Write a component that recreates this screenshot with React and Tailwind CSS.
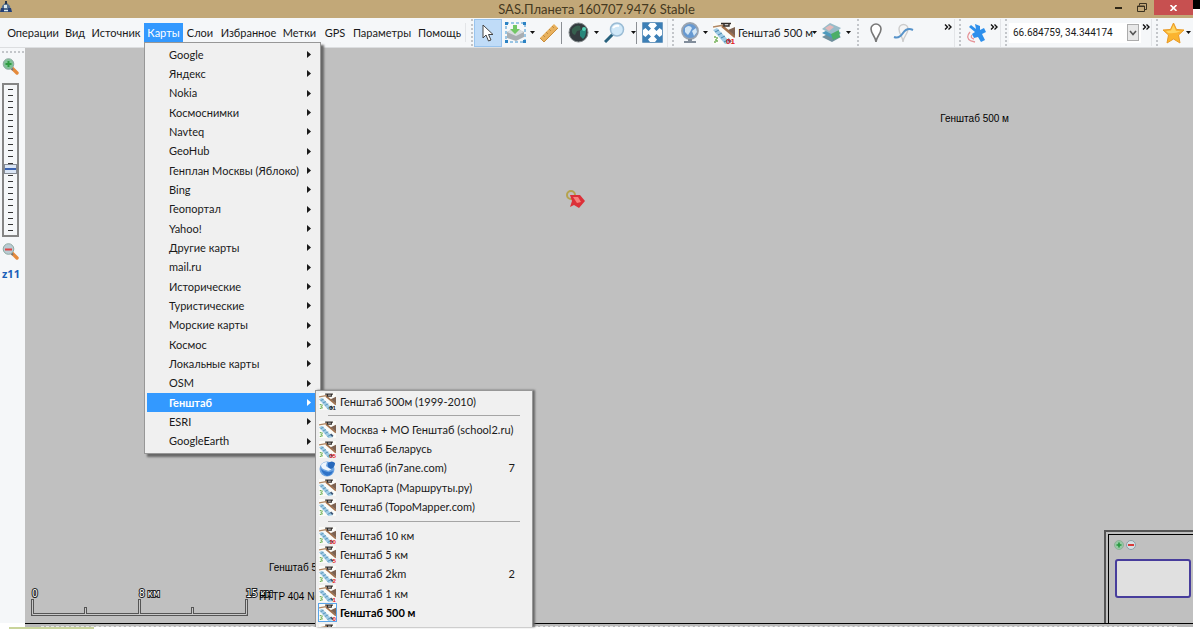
import React from 'react';

const menuItems = [
  { label: 'Операции', width: 'w-[58px]' },
  { label: 'Вид', width: 'w-[26px]' },
  { label: 'Источник', width: 'w-[56px]' },
  { label: 'Карты', width: 'w-[39px]', open: true },
  { label: 'Слои', width: 'w-[34px]' },
  { label: 'Избранное', width: 'w-[63px]' },
  { label: 'Метки', width: 'w-[39px]' },
  { label: 'GPS', width: 'w-[32px]' },
  { label: 'Параметры', width: 'w-[62px]' },
  { label: 'Помощь', width: 'w-[53px]' },
];

const mapGroups = [
  'Google', 'Яндекс', 'Nokia', 'Космоснимки', 'Navteq', 'GeoHub', 'Генплан Москвы (Яблоко)',
  'Bing', 'Геопортал', 'Yahoo!', 'Другие карты', 'mail.ru', 'Исторические', 'Туристические',
  'Морские карты', 'Космос', 'Локальные карты', 'OSM', 'Генштаб', 'ESRI', 'GoogleEarth',
];

const schoolMaps = [
  { label: 'Москва + МО Генштаб (school2.ru)' },
  { label: 'Генштаб Беларусь', mark: '05', markColor: '#e02020' },
  { label: 'Генштаб (in7ane.com)', hotkey: '7', globe: true },
  { label: 'ТопоКарта (Маршруты.ру)' },
  { label: 'Генштаб (TopoMapper.com)' },
];

const scaleMaps = [
  { label: 'Генштаб 10 км', mark: '10', markColor: '#e02020' },
  { label: 'Генштаб 5 км', mark: '5', markColor: '#e02020' },
  { label: 'Генштаб 2km', mark: '2', markColor: '#e02020', hotkey: '2' },
  { label: 'Генштаб 1 км', mark: '1', markColor: '#e02020' },
  { label: 'Генштаб 500 м', mark: '0', markColor: '#e02020', active: true },
  { label: '' },
];

const MapIcon = ({ size = 17, mark, markColor = '#222' }) => (
  <svg width={size} height={size} viewBox="0 0 22 22" className="shrink-0">
    <rect width="22" height="22" fill="#fbfbf8" />
    <path d="M0 8 L4 6 L18 21 L12 22 Z" fill="#9fcbe6" />
    <path d="M2 10 l4 -2 M5 13 l4 -2 M8 16 l4 -2 M11 20 l4 -2" stroke="#4585ab" strokeWidth="1" />
    <path d="M0 5 L11 3" stroke="#b08763" strokeWidth="1.6" fill="none" />
    <path d="M9 4 L22 15" stroke="#a2714c" strokeWidth="2.4" fill="none" />
    <path d="M15 8 L22 5 V14 Z" fill="#7d6251" />
    <path d="M8 1.5 h10 M11 2 v2 h5 V2" stroke="#302b28" strokeWidth="1.4" fill="none" />
    <path d="M1 15 h3 v5 H1 M2 18 h3" stroke="#74b35b" strokeWidth="1.5" strokeDasharray="2 1" fill="none" />
    <path d="M15 17 l3 3" stroke="#3a5576" strokeWidth="2.2" />
    {mark && (
      <text x="22" y="22" textAnchor="end" fontSize="8" fontWeight="700" fontFamily="Liberation Sans, sans-serif" fill={markColor}>{mark}</text>
    )}
  </svg>
);

const BirdIcon = () => (
  <svg width="17" height="17" viewBox="0 0 17 17" className="shrink-0">
    <circle cx="8" cy="9" r="7.5" fill="#6ba3e2" />
    <path d="M2 5 Q4 2 8 2 L7 6 Q10 9 13 8 Q11 12 7 10 Q2 9 2 5Z" fill="#eef6fd" />
    <path d="M9 3 Q13 0 16 3 Q16 7 12 9 Q8 8 9 3Z" fill="#2768bb" />
    <path d="M2 9 Q3 14 8 16 Q13 15 14 11 Q8 14 2 9Z" fill="#2f73c8" />
  </svg>
);

const Caret = ({ className = 'w-[10px]' }) => (
  <span className={`flex h-full shrink-0 items-center justify-center ${className}`}>
    <svg width="5" height="3" viewBox="0 0 5 3" className="shrink-0"><path d="M0 0h5L2.5 3z" fill="#111" /></svg>
  </span>
);

const Grip = () => <span className="h-[27px] w-0 shrink-0 border-l-2 border-dotted border-[#c3c6ca]" />;

const Divider = () => <span className="h-[22px] w-px shrink-0 bg-[#8b8f94]" />;

const More = () => (
  <button aria-label="Ещё" className="mb-3 flex h-3 w-[10px] shrink-0 items-center justify-center">
    <svg width="8" height="6" viewBox="0 0 8 6">
      <path d="M1 .5 L3.5 3 L1 5.5 M4.5 .5 L7 3 L4.5 5.5" stroke="#111" strokeWidth="1.4" fill="none" />
    </svg>
  </button>
);

const ToolButton = ({ label, className = '', children }) => (
  <button aria-label={label} className={`flex h-[28px] shrink-0 items-center justify-center ${className}`}>
    {children}
  </button>
);

const ZoomGlass = ({ minus }) => (
  <svg width="17" height="17" viewBox="0 0 17 17">
    <path d="M10 10 L15 15" stroke="#e58a3c" strokeWidth="3.4" strokeLinecap="round" />
    <path d="M9 10 L11 12" stroke="#777" strokeWidth="2" />
    <circle cx="6.5" cy="6" r="5.3" fill={minus ? '#b9cbd3' : '#7fc296'} stroke="#8fa9a2" strokeWidth="1" />
    <path d={minus ? 'M3 6.5h7' : 'M3.5 6h6M6.5 3v6'} stroke={minus ? '#dd4545' : '#2f9b41'} strokeWidth="2" />
  </svg>
);

const SubmenuItem = ({ label, mark, markColor, hotkey, globe, active }) => (
  <button role="menuitem" className={`flex min-h-0 items-center pl-[2px] text-left ${active ? 'font-bold text-black' : ''}`}>
    <span className={`flex items-center justify-center ${active ? 'h-[19px] w-[19px] border border-[#5aa5ea] bg-[#cfe5fa]' : 'h-[17px] w-[19px]'}`}>
      {globe ? <BirdIcon /> : <MapIcon mark={mark} markColor={markColor} />}
    </span>
    <span className="ml-[3px] flex-1 whitespace-nowrap">{label}</span>
    {hotkey && <span className="mr-[17px]">{hotkey}</span>}
  </button>
);

const TitleBar = () => (
  <header className="relative flex h-[18px] shrink-0 items-start bg-[#c2a878]">
    <svg width="12" height="14" viewBox="0 0 12 14" className="shrink-0">
      <path d="M6 2 L10 6 L11 12 H1 L2 6Z" fill="#56718f" />
      <path d="M1 8 h3 v4 H0z M8 8 h3 l1 4 H8z" fill="#233f77" />
      <path d="M4 5 h3 v3 H4z M4 10h4v1H4z" fill="#dce9ef" />
      <path d="M5 1h2v3H5z" fill="#26354b" />
    </svg>
    <h1 className="mr-[12px] flex-1 text-center text-[13px] leading-[18px] text-[#45391f]">SAS.Планета 160707.9476 Stable</h1>
    <div className="absolute right-0 top-0 flex h-[15px]">
      <button aria-label="Свернуть" className="flex w-[24px] items-center justify-center">
        <span className="h-[2px] w-[7px] bg-[#2e2717]" />
      </button>
      <button aria-label="Восстановить" className="flex w-[24px] items-center justify-center">
        <svg width="10" height="9" viewBox="0 0 10 9" fill="none" stroke="#3b3220">
          <path d="M2.5 2.5 V.5 H9.5 V6.5 H7.5" />
          <path d="M.5 3 H7.5 V8.5 H.5 Z M.5 3.5 H7.5" />
        </svg>
      </button>
      <button aria-label="Закрыть" className="flex w-[39px] items-center justify-center bg-[#c75050]">
        <svg width="7" height="6" viewBox="0 0 7 6"><path d="M.5 0 L6.5 6 M6.5 0 L.5 6" stroke="#fff" strokeWidth="1.6" /></svg>
      </button>
    </div>
  </header>
);

const Toolbar = () => (
  <div className="flex h-[30px] shrink-0 items-center border-b border-[#dcdee0] bg-[#f5f7f9]">
    <nav className="flex w-[466px] shrink-0 items-center border-r border-[#e3e5e8] pl-1">
      {menuItems.map((item) => (
        <button
          key={item.label}
          className={`flex h-[19px] shrink-0 items-center justify-center whitespace-nowrap ${item.width} ${
            item.open ? 'bg-[#3399ff] text-white' : ''
          }`}
        >
          {item.label}
        </button>
      ))}
    </nav>

    {/* Tools */}
    <div className="flex w-[202px] shrink-0 items-center border-r border-[#e3e5e8] pl-[5px]">
      <Grip />
      <ToolButton label="Указатель" className="ml-px w-[28px] border border-[#99c4ee] bg-[#c0dcf8]">
        <svg width="12" height="18" viewBox="0 0 12 18">
          <path d="M1 1 V14 L4 11 L6.5 17 L9 16 L6.5 10.5 H11 Z" fill="#fff" stroke="#444" strokeLinejoin="round" />
        </svg>
      </ToolButton>
      <ToolButton label="Выделение" className="w-[26px]">
        <svg width="21" height="21" viewBox="0 0 21 21">
          <path d="M2 10 L10 6 L19 10 V15 L11 19 L2 16Z" fill="#a9aeb2" />
          <path d="M2 10 L10 6 L19 10 L11 14Z" fill="#d9dddf" />
          <path d="M8 3 h4 v4 h3 l-5 5 -5 -5 h3z" fill="#72c765" />
          <path d="M1 1 H20 V20 H1 Z" fill="none" stroke="#3e94d0" strokeWidth="1" strokeDasharray="3 2" />
          <path d="M0 0h3v3H0zM18 0h3v3h-3zM0 18h3v3H0zM18 18h3v3h-3z" fill="#2b82c4" />
        </svg>
      </ToolButton>
      <Caret className="w-[8px]" />
      <ToolButton label="Линейка" className="w-[25px]">
        <svg width="20" height="20" viewBox="0 0 20 20">
          <path d="M1 15 L15 1 L19 5 L5 19 Z" fill="#e8b15e" />
          <path d="M1 15 L5 19 L19 5" fill="none" stroke="#c98d3d" />
          <path d="M4 12l2 2M7 9l2 2M10 6l2 2M13 3l2 2" stroke="#c18a3d" />
        </svg>
      </ToolButton>
      <span className="w-[5px]" />
      <Divider />
      <ToolButton label="Источник" className="w-[32px]">
        <svg width="21" height="21" viewBox="0 0 21 21">
          <circle cx="10.5" cy="10.5" r="9.5" fill="#333b3f" stroke="#81888a" />
          <path d="M4 7 Q8 2 12 4 L13 8 L9 9 L7 13 Q3 12 4 7Z" fill="#365f4e" />
          <path d="M12 9 Q16 5 18 9 Q18 14 15 17 L12 14Z" fill="#28867b" />
          <circle cx="16" cy="7" r="2" fill="#53d1b5" />
        </svg>
      </ToolButton>
      <Caret className="w-[4px]" />
      <ToolButton label="Поиск" className="w-[32px]">
        <svg width="21" height="21" viewBox="0 0 21 21">
          <path d="M1 20 L9 12" stroke="#27617d" strokeWidth="3" />
          <circle cx="13" cy="7.5" r="6.5" fill="#d0e8f8" stroke="#9abcd5" strokeWidth="1.5" />
          <path d="M9 6 Q11 3 15 4" stroke="#fff" strokeWidth="2" fill="none" />
        </svg>
      </ToolButton>
      <Caret className="w-[6px]" />
      <span className="w-px" />
      <Divider />
      <ToolButton label="Во весь экран" className="w-[31px]">
        <svg width="21" height="21" viewBox="0 0 21 21">
          <path d="M.5 .5h20v20H.5z" fill="#fff" stroke="#6d9ac0" />
          <path d="M1 1h7l-2 2.5 3 3L6.500 9l-3-3L1 8z M20 1h-7l2 2.500-3 3L14.500 9l3-3L20 8z M1 20h7l-2-2.500 3-3L6.500 12l-3 3L1 13z M20 20h-7l2-2.500-3-3 2.500-2.500 3 3L20 13z" fill="#3c7fb6" />
        </svg>
      </ToolButton>
    </div>

    {/* Current map and layers */}
    <div className="flex w-[185px] shrink-0 items-center pl-[4px]">
      <Grip />
      <ToolButton label="Сеть" className="ml-[4px] w-[25px]">
        <svg width="19" height="21" viewBox="0 0 19 21">
          <circle cx="9" cy="9" r="8" fill="#6699d2" stroke="#9aa4b0" strokeWidth="1.8" />
          <path d="M4 6 Q8 2 11 6 L9 10 7 13 4 10Z M11 9 l4-3 1 4-3 4z" fill="#d3e6f5" />
          <path d="M7 17h4v2h4v2H3v-2h4z" fill="#818d9b" />
        </svg>
      </ToolButton>
      <Caret className="w-[5px]" />
      <ToolButton label="Выбор карты" className="pl-[5px]">
        <MapIcon size={22} mark="01" markColor="#e02020" />
        <span className="ml-[3px] w-[73px] whitespace-nowrap text-left">Генштаб 500 м</span>
      </ToolButton>
      <Caret className="w-[6px]" />
      <ToolButton label="Слои" className="w-[28px]">
        <svg width="21" height="21" viewBox="0 0 21 21">
          <path d="M1 15 L10 10 L20 15 L11 20Z" fill="#6f8f9d" />
          <path d="M1 11 L10 6 L20 11 L11 16Z" fill="#4d9abd" />
          <path d="M1 7 L9 1 L20 6 L12 13Z" fill="#98bcc9" />
          <path d="M10 12 l8-4 1 7 -7 3z" fill="#4cae67" />
          <path d="M4 6l5-3 4 2-5 4z" fill="#e3b9ba" />
        </svg>
      </ToolButton>
      <Caret className="w-[6px]" />
    </div>

    {/* Placemarks */}
    <div className="flex min-w-0 flex-1 items-center border-r border-[#e3e5e8] pl-[4px]">
      <Grip />
      <ToolButton label="Метка" className="ml-[7px] w-[20px]">
        <svg width="12" height="20" viewBox="0 0 12 20">
          <path d="M6 19 C6 14 1 11 1 6 A5 5 0 0 1 11 6 C11 11 6 14 6 19Z" fill="#fff" stroke="#777" strokeWidth="1.6" />
        </svg>
      </ToolButton>
      <ToolButton label="Путь" className="ml-[5px] w-[24px]">
        <svg width="21" height="20" viewBox="0 0 21 20">
          <path d="M10 19 C10 14 6 11 6 6 A4.5 4.5 0 0 1 15 6 C15 11 10 14 10 19Z" fill="#f5f5f5" stroke="#ccc" strokeWidth="1.4" />
          <path d="M1 14 Q6 16 10 10 Q14 4 20 7" fill="none" stroke="#5793ca" strokeWidth="2" />
        </svg>
      </ToolButton>
      <span className="flex-1" />
      <More />
      <span className="w-px" />
    </div>

    {/* GPS */}
    <div className="flex w-[46px] shrink-0 items-center border-r border-[#e3e5e8] pl-[4px]">
      <Grip />
      <ToolButton label="GPS-приёмник" className="ml-[4px] w-[24px]">
        <svg width="20" height="20" viewBox="0 0 20 20">
          <path d="M8 1 L13 3 L13 7 L17 5 L19 9 L15 11 L18 17 L14 19 L11 14 L7 15 L5 11 L8 9 L2 4 L4 2 L9 6Z" fill="#2d8fec" />
          <path d="M3 9 Q-2 15 4 18 L8 19 M5 12 Q3 15 7 16" fill="none" stroke="#e69498" strokeWidth="1.3" />
        </svg>
      </ToolButton>
      <More />
    </div>

    {/* Coordinates */}
    <div className="flex w-[151px] shrink-0 items-center border-r border-[#e3e5e8] pl-[4px]">
      <Grip />
      <div className="ml-[2px] flex h-[20px] w-[132px] items-center bg-white">
        <input aria-label="Координаты" defaultValue="66.684759, 34.344174" className="w-[118px] pl-[4px] text-[10px] outline-none font-['Roboto',sans-serif]" />
        <button aria-label="История координат" className="flex h-[17px] w-[12px] items-center justify-center border border-[#acacac] bg-[#e8e8e8]">
          <svg width="8" height="6" viewBox="0 0 8 6"><path d="M1 1 L4 4.5 L7 1" fill="none" stroke="#555" strokeWidth="1.6" /></svg>
        </button>
      </div>
      <More />
    </div>

    {/* Favorites */}
    <div className="flex w-[41px] shrink-0 items-center pl-[4px]">
      <Grip />
      <ToolButton label="Избранное" className="ml-[3px] w-[24px]">
        <svg width="23" height="22" viewBox="0 0 23 22">
          <path d="M11.5 1 L14.5 7.5 L22 8 L16.5 13 L18 21 L11.5 17 L5 21 L6.5 13 L1 8 L8.5 7.5Z" fill="#fbb42f" stroke="#e99a26" />
          <path d="M11.5 3 L14 9 L19 9 Q13 12 6 11 L4 9 L9 8.5Z" fill="#ffd562" />
        </svg>
      </ToolButton>
      <Caret className="w-[6px]" />
    </div>
  </div>
);

const ZoomPanel = () => (
  <aside className="flex w-[25px] shrink-0 flex-col items-start bg-[#f5f7f9] pl-[2px]">
    <span className="mt-[3px] w-[22px] border-t-2 border-dotted border-[#c3c6ca]" />
    <button aria-label="Увеличить" className="mt-[5px] h-[17px]"><ZoomGlass /></button>
    <div className="relative mt-[8px] flex h-[154px] w-[17px] flex-col items-center justify-between border-2 border-[#858585] py-[4px]">
      {Array.from({ length: 24 }, (_, i) => (
        <span key={i} className="h-px w-[5px] bg-[#333]" />
      ))}
      <span className="absolute left-0 top-[79px] flex h-[10px] w-[13px] items-center border border-[#858b94] bg-[#dbe6f5]">
        <span className="h-[2px] w-full bg-[#3a62b0]" />
      </span>
      <input aria-label="Масштаб" type="range" min="1" max="24" defaultValue="11" className="absolute inset-0 h-full w-full opacity-0 [writing-mode:vertical-lr]" />
    </div>
    <button aria-label="Уменьшить" className="mt-[6px] h-[17px]"><ZoomGlass minus /></button>
    <span className="mt-[7px] font-['Open_Sans',sans-serif] text-[11px] font-bold leading-[14px] text-[#1a5fb8]">z11</span>
  </aside>
);

const ScaleBar = () => (
  <svg width="250" height="32" viewBox="0 0 250 32" fontSize="10" fontFamily="'DejaVu Sans Condensed', 'DejaVu Sans', sans-serif">
    <g fill="none">
      <path d="M3.5 14 V29.5 H217.5 V14 M110.5 14 V29 M56.5 22 V29 M163.5 22 V29" stroke="#555" strokeWidth="3" />
      <path d="M3.5 15 V29.5 H217.5 V15 M110.5 15 V29 M56.5 23 V29 M163.5 23 V29" stroke="#c8c8c8" strokeWidth="1" />
    </g>
    <g fill="#fff" stroke="#222" strokeWidth="2" paintOrder="stroke">
      <text x="3" y="12">0</text>
      <text x="110" y="12">8 км</text>
      <text x="217" y="12">15 км</text>
    </g>
  </svg>
);

const MiniMap = () => (
  <div className="absolute bottom-0 right-0 h-[93px] w-[89px] border-l-2 border-t-2 border-[#555] pl-[2px] pt-[2px]">
    <div className="h-full border-l border-t border-black px-[1px] pt-[5px]">
      <div className="flex gap-[2px] pl-[4px]">
        <button aria-label="Приблизить обзор" className="flex h-[10px] w-[10px]">
          <svg width="10" height="10" viewBox="0 0 10 10"><circle cx="5" cy="5" r="4.5" fill="#96c9a4" stroke="#8fae98" /><path d="M2.5 5h5M5 2.5v5" stroke="#26973e" strokeWidth="1.6" /></svg>
        </button>
        <button aria-label="Отдалить обзор" className="flex h-[10px] w-[10px]">
          <svg width="10" height="10" viewBox="0 0 10 10"><circle cx="5" cy="5" r="4.5" fill="#d6dfe4" stroke="#8a9fa8" /><path d="M2 5h6" stroke="#d83a3a" strokeWidth="2" /></svg>
        </button>
      </div>
      <div className="ml-[5px] mt-[9px] h-[39px] w-[76px] rounded-[3px] border-2 border-[#473d9c] bg-[#e0e0e0]" />
    </div>
  </div>
);

const MapsMenu = () => (
  <div role="menu" className="absolute left-[144px] top-[42px] z-10 grid h-[412px] w-[177px] auto-rows-fr border border-[#979797] bg-[#f0f0f0] p-[2px] shadow-[3px_3px_2px_#686868]">
    {mapGroups.map((label) => {
      const active = label === 'Генштаб';
      return (
        <button
          key={label}
          role="menuitem"
          className={`flex min-h-0 items-center justify-between pl-[22px] pr-[7px] text-left ${
            active ? 'bg-[#3399ff] font-bold text-white' : ''
          }`}
        >
          <span className="whitespace-nowrap">{label}</span>
          <svg width="4" height="7" viewBox="0 0 4 7"><path d="M0 0 L4 3.5 L0 7Z" fill="currentColor" /></svg>
        </button>
      );
    })}
  </div>
);

const GenshtabMenu = () => (
  <div role="menu" className="absolute bottom-[2px] left-[315px] top-[390px] z-20 w-[218px] overflow-hidden border border-b-0 border-[#979797] bg-[#f0f0f0] pt-px shadow-[2px_0_2px_#686868]">
    <div className="grid h-[19px]">
      <SubmenuItem label="Генштаб 500м (1999-2010)" mark="01" />
    </div>
    <hr className="my-[4px] ml-[12px] mr-[12px] border-[#a5a5a5]" />
    <div className="grid h-[97px] auto-rows-fr">
      {schoolMaps.map((item) => <SubmenuItem key={item.label} {...item} />)}
    </div>
    <hr className="my-[4px] ml-[12px] mr-[12px] border-[#a5a5a5]" />
    <div className="grid h-[116px] auto-rows-fr">
      {scaleMaps.map((item) => <SubmenuItem key={item.label} {...item} />)}
    </div>
  </div>
);

export default function App() {
  return (
    <div className="flex h-screen overflow-hidden bg-white font-['Lato','Noto_Sans',sans-serif] text-[11px] leading-[16px] text-[#1a1a1a]">
      <div className="relative flex min-w-0 flex-1 flex-col">
        <TitleBar />
        <Toolbar />
        <div className="flex min-h-0 flex-1">
          <ZoomPanel />
          <main className="relative min-w-0 flex-1 overflow-hidden bg-[#c0c0c0] font-['Liberation_Sans',sans-serif] text-[10px] leading-[14px] text-black">
            <span className="absolute right-[184px] top-[64px] whitespace-nowrap">Генштаб 500 м</span>
            <span className="absolute bottom-[48px] left-[244px] whitespace-nowrap">Генштаб 5</span>
            <div className="absolute bottom-[6px] left-[4px]"><ScaleBar /></div>
            <span className="absolute bottom-[19px] left-[234px] whitespace-nowrap">HTTP 404 Not</span>
            <svg width="20" height="20" viewBox="0 0 20 20" className="absolute left-[541px] top-[142px]">
              <circle cx="5" cy="5" r="4" fill="none" stroke="#b5a34d" strokeWidth="2" />
              <path d="M4 5 H14 L19 11 L13 18 L8 15 L4 17 L6 11Z" fill="#dc3038" />
              <path d="M7 7 l5 0 3 5-4 1z" fill="#f6807c" />
            </svg>
            <MiniMap />
          </main>
        </div>
        <footer className="flex h-[6px] shrink-0 flex-col">
          <div className="ml-[25px] h-[4px] border-t border-black bg-[#b9b9b9]">
            <div className="mx-[16px] mt-[2px] border-t border-dashed border-[#e6e6e6]" />
          </div>
          <div className="ml-[9px] h-[2px] w-[85px] bg-[#c9d49b]" />
        </footer>
        <MapsMenu />
        <GenshtabMenu />
      </div>
      <div className="w-[7px] shrink-0 border-t-[9px] border-black bg-white" />
    </div>
  );
}
